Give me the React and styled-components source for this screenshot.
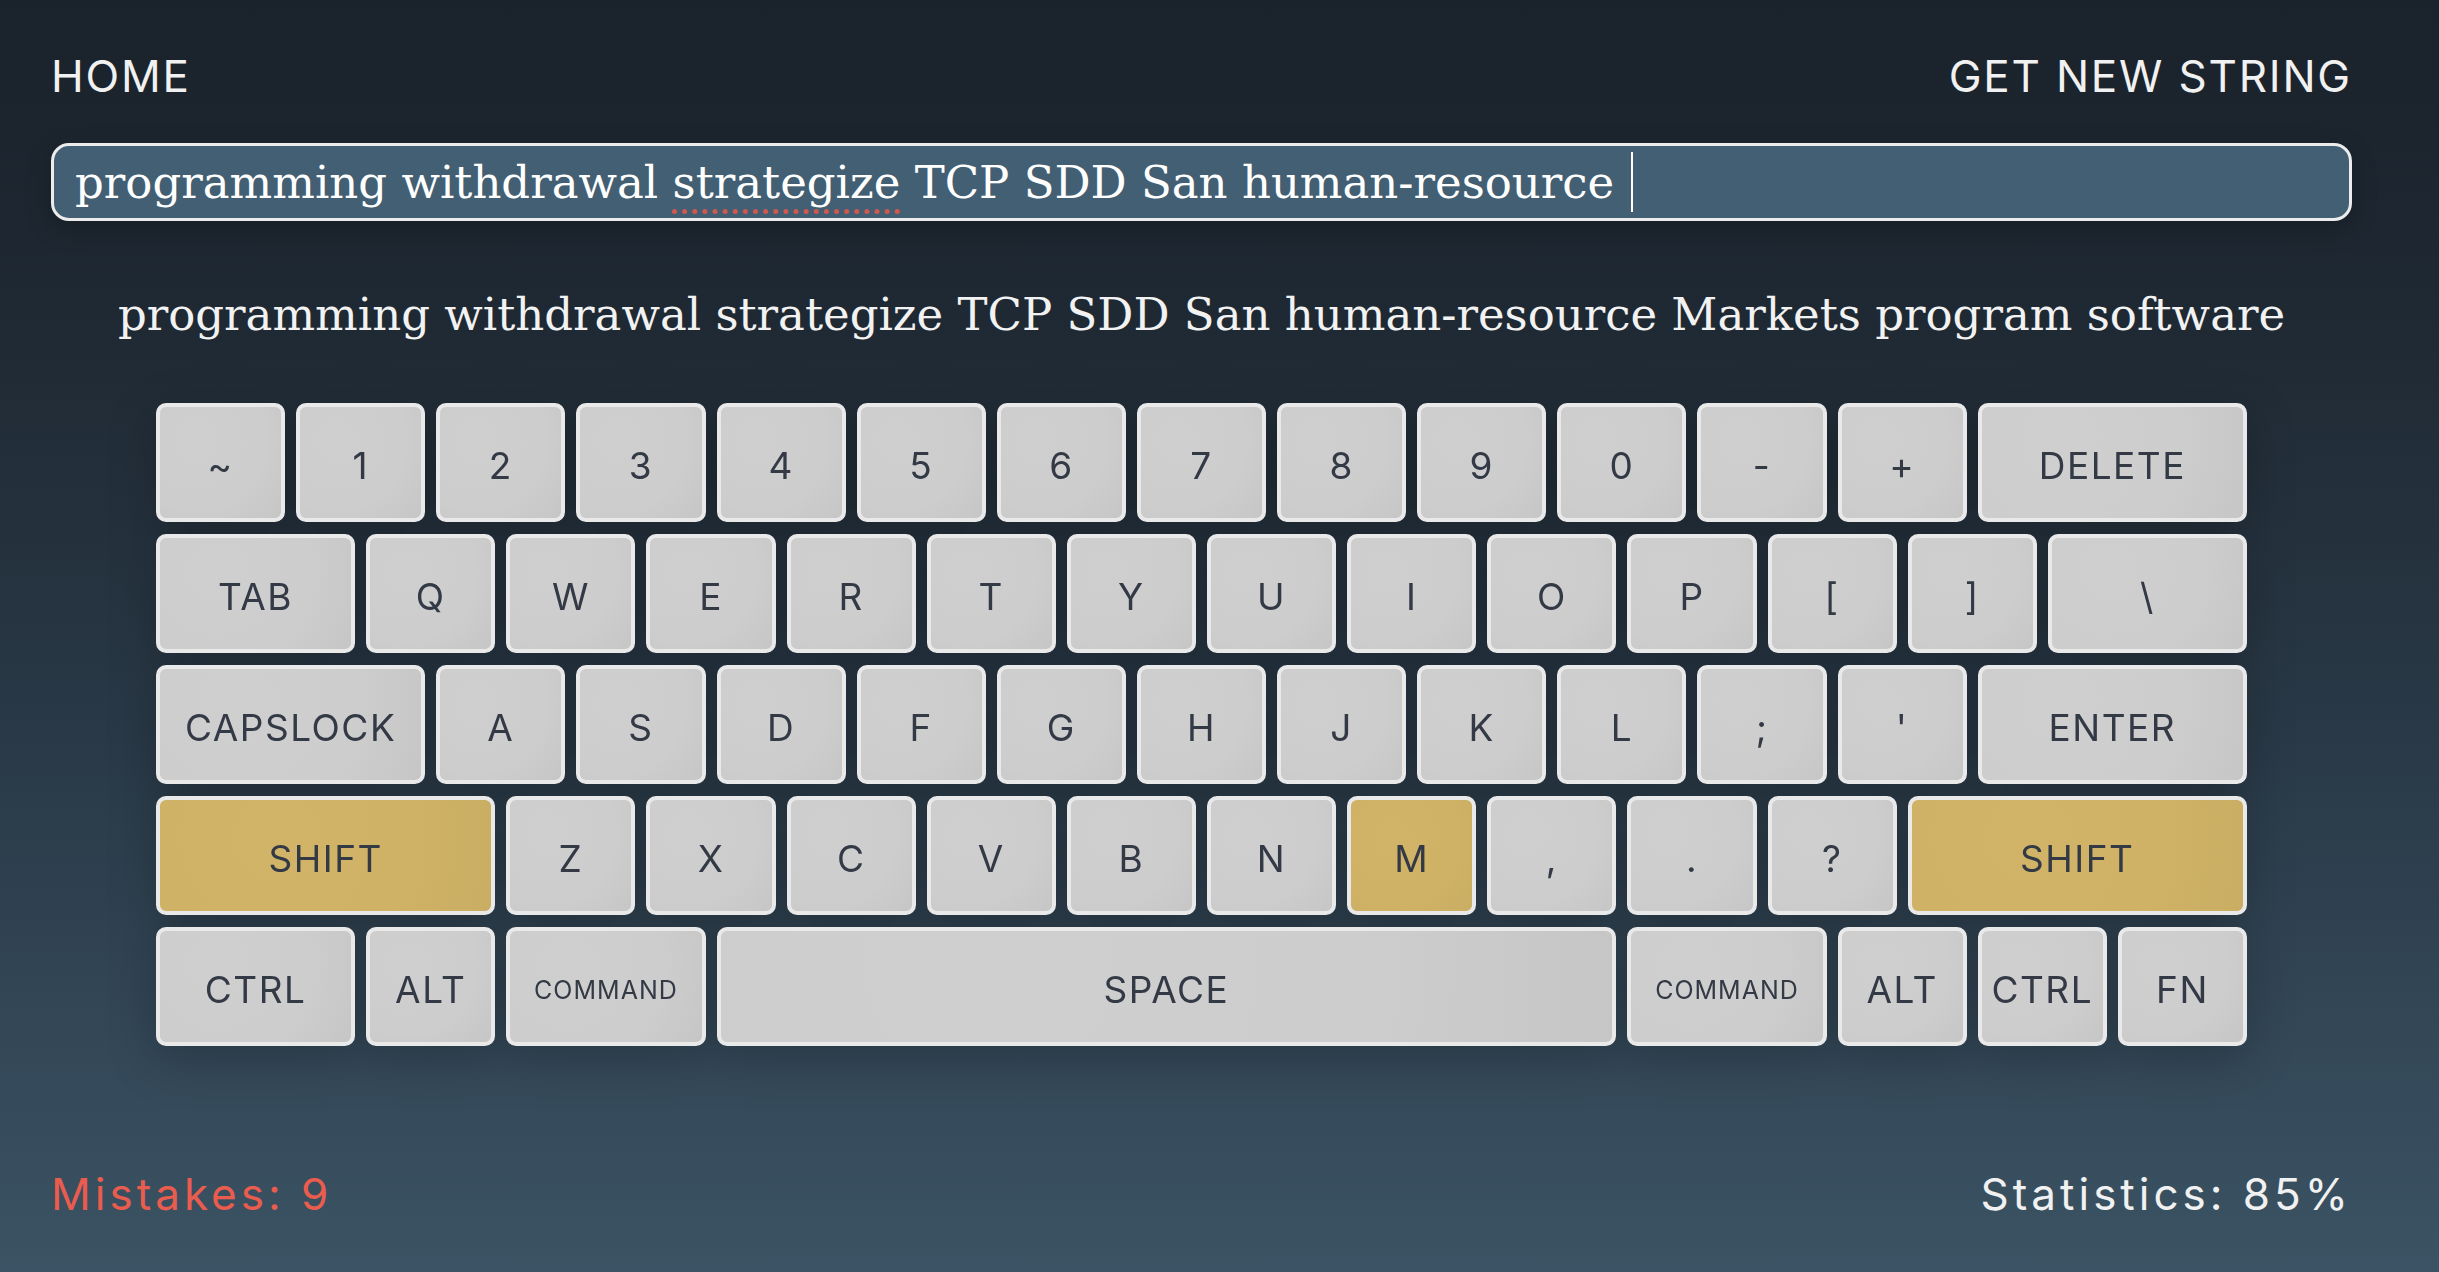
import React from "react";
import styled, { createGlobalStyle } from "styled-components";

const Global = createGlobalStyle`
  html, body { margin: 0; padding: 0; }
  body {
    min-height: 100vh;
    background: linear-gradient(180deg, #1a222b 0%, #1f2933 25%, #2a3a48 60%, #3b5364 100%);
    font-family: Inter, "Noto Sans", sans-serif;
  }
`;

const Page = styled.div`
  min-height: 1272px;
  box-sizing: border-box;
  padding: 54px 87px 0 51px;
  display: flex;
  flex-direction: column;
`;

const Header = styled.header`
  display: flex;
  justify-content: space-between;
  align-items: center;
  height: 44px;
`;

const NavLink = styled.a`
  color: #f1f1f1;
  font-family: Inter, sans-serif;
  font-size: 44px;
  line-height: 44px;
  letter-spacing: 1.8px;
  text-decoration: none;
  font-weight: 400;
`;

const InputBox = styled.div`
  margin-top: 45px;
  height: 78px;
  box-sizing: border-box;
  border: 3px solid #ececec;
  border-radius: 18px;
  background: #435f73;
  display: flex;
  align-items: center;
  padding: 0 21px;
  box-shadow: 0 8px 24px rgba(0, 0, 0, 0.25);
`;

const Typed = styled.span`
  font-family: "DejaVu Serif", serif;
  font-size: 45px;
  color: #ffffff;
  white-space: pre;
  line-height: 1;
`;

const Misspelled = styled.span`
  text-decoration: underline dotted #d2574c;
  text-decoration-thickness: 5px;
  text-underline-offset: 11px;
`;

const Caret = styled.span`
  display: inline-block;
  width: 2px;
  height: 60px;
  background: #ffffff;
  margin-left: 2px;
`;

const Target = styled.p`
  margin: 67px 0 0;
  text-align: center;
  font-family: "DejaVu Serif", serif;
  font-size: 45px;
  line-height: 54px;
  color: #f2f2f2;
  white-space: nowrap;
`;

const Keyboard = styled.div`
  margin: 61px auto 0;
  width: 2091px;
  display: flex;
  flex-direction: column;
  gap: 12px;
  filter: drop-shadow(0 14px 24px rgba(0, 0, 0, 0.22));
`;

const Row = styled.div`
  display: grid;
  grid-template-columns: repeat(30, 1fr);
  column-gap: 11px;
`;

const Key = styled.div`
  grid-column: span ${(p) => p.$span};
  height: 119px;
  box-sizing: border-box;
  border: 4px solid #e9e9e9;
  border-radius: 10px;
  background: ${(p) =>
    p.$active
      ? "radial-gradient(circle at 35% 35%, #d1b467 0%, #cfb266 60%, #c9ad62 100%)"
      : "radial-gradient(circle at 30% 30%, #cfcfcf 0%, #cdcdcd 60%, #c6c6c6 100%)"};
  display: flex;
  align-items: center;
  justify-content: center;
  color: #333945;
  font-family: Inter, sans-serif;
  font-size: ${(p) => (p.$small ? "25px" : "37px")};
  letter-spacing: ${(p) => (p.$small ? "1px" : "1.5px")};
  padding-top: 6px;
`;

const Footer = styled.footer`
  margin-top: auto;
  height: 44px;
  margin-bottom: 56px;
  display: flex;
  justify-content: space-between;
  align-items: center;
`;

const Stat = styled.span`
  font-family: Inter, sans-serif;
  font-size: 44px;
  letter-spacing: 4px;
  color: ${(p) => (p.$error ? "#ea5c4e" : "#f1f1f1")};
`;

const rows = [
  [["~"], ["1"], ["2"], ["3"], ["4"], ["5"], ["6"], ["7"], ["8"], ["9"], ["0"], ["-"], ["+"], ["DELETE", 4]],
  [["TAB", 3], ["Q"], ["W"], ["E"], ["R"], ["T"], ["Y"], ["U"], ["I"], ["O"], ["P"], ["["], ["]"], ["\\", 3]],
  [["CAPSLOCK", 4], ["A"], ["S"], ["D"], ["F"], ["G"], ["H"], ["J"], ["K"], ["L"], [";"], ["'"], ["ENTER", 4]],
  [["SHIFT", 5, true], ["Z"], ["X"], ["C"], ["V"], ["B"], ["N"], ["M", 2, true], [","], ["."], ["?"], ["SHIFT", 5, true]],
  [["CTRL", 3], ["ALT"], ["COMMAND", 3, false, true], ["SPACE", 13], ["COMMAND", 3, false, true], ["ALT"], ["CTRL"], ["FN"]],
];

export default function App() {
  return (
    <>
      <Global />
      <Page>
        <Header>
          <NavLink href="#">HOME</NavLink>
          <NavLink href="#">GET NEW STRING</NavLink>
        </Header>
        <InputBox>
          <Typed>
            {"programming withdrawal "}
            <Misspelled>strategize</Misspelled>
            {" TCP SDD San human-resource "}
          </Typed>
          <Caret />
        </InputBox>
        <Target>
          programming withdrawal strategize TCP SDD San human-resource Markets program software
        </Target>
        <Keyboard>
          {rows.map((row, i) => (
            <Row key={i}>
              {row.map(([label, span = 2, active = false, small = false], j) => (
                <Key key={j} $span={span} $active={active} $small={small}>
                  {label}
                </Key>
              ))}
            </Row>
          ))}
        </Keyboard>
        <Footer>
          <Stat $error>Mistakes: 9</Stat>
          <Stat>Statistics: 85%</Stat>
        </Footer>
      </Page>
    </>
  );
}
